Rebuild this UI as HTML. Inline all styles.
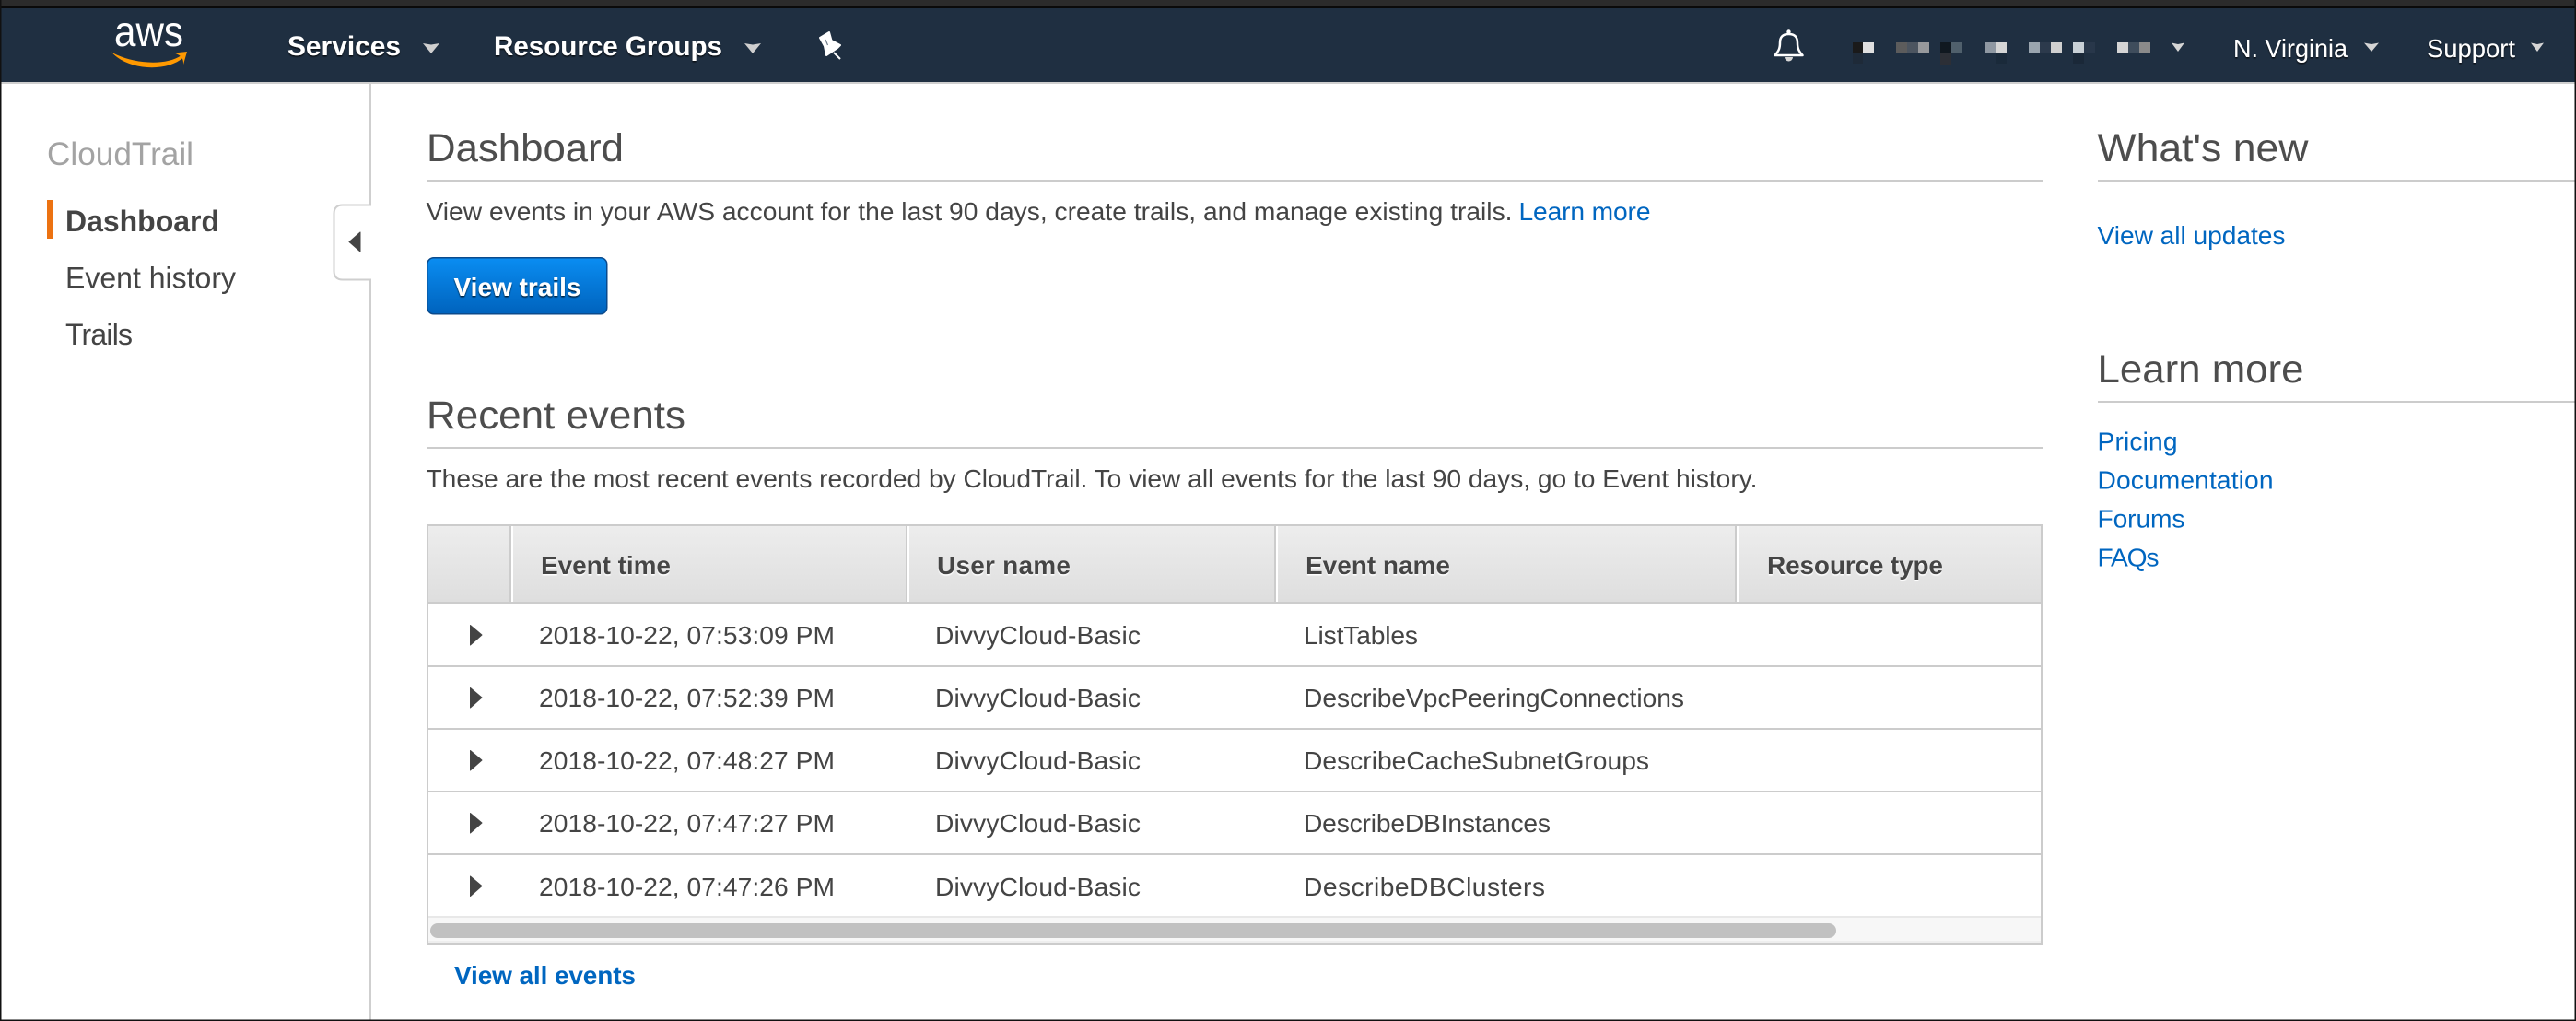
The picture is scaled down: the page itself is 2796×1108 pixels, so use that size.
<!DOCTYPE html>
<html lang="en">
<head>
<meta charset="utf-8">
<title>CloudTrail Dashboard</title>
<style>
html,body{margin:0;padding:0;background:#fff;width:2796px;height:1108px;overflow:hidden}
svg{display:block}
text{font-family:"Liberation Sans",Arial,sans-serif;white-space:pre}
.b{font-weight:700}
.t{font-size:28.2px;fill:#444}
.l{font-size:28.2px;fill:#0066c0}
.h{font-size:43px;fill:#4d4d4d}
.s{font-size:32px;fill:#444}
.th{font-size:28px;font-weight:700;fill:#444}
.n{fill:#fff;font-size:28px}
.nb{fill:#fff;font-size:29.5px}
</style>
</head>
<body>
<svg width="2796" height="1108" viewBox="0 0 2796 1108" xmlns="http://www.w3.org/2000/svg">
<defs>
<linearGradient id="btn" x1="0" y1="0" x2="0" y2="1"><stop offset="0" stop-color="#0a8df2"/><stop offset="1" stop-color="#0063bd"/></linearGradient>
<linearGradient id="th" x1="0" y1="0" x2="0" y2="1"><stop offset="0" stop-color="#ededed"/><stop offset="1" stop-color="#dedede"/></linearGradient>
<filter id="sd" x="-5%" y="-20%" width="110%" height="150%"><feDropShadow dx="0" dy="1.5" stdDeviation="0.8" flood-color="#000" flood-opacity=".75"/></filter>
<filter id="sw" x="-5%" y="-20%" width="110%" height="150%"><feDropShadow dx="0" dy="1.5" stdDeviation="0.4" flood-color="#fff" flood-opacity="1"/></filter>
</defs>

<!-- window edge + top bar -->
<rect width="2796" height="1108" fill="#fff"/>
<rect width="2796" height="7" fill="#2b2b2b"/>
<rect y="7" width="2796" height="2" fill="#0a0a0a"/>
<rect y="9" width="2796" height="80" fill="#1f2f41"/>
<rect y="89" width="2796" height="2" fill="#cfcfcf"/>

<!-- aws logo -->
<text x="124" y="50" font-size="46" fill="#fff" textLength="75" lengthAdjust="spacingAndGlyphs">aws</text>
<path d="M121 56.500 C140 68 178 73 197 60 L199 62.500 C180 79 138 76 121 56.500Z" fill="#f90"/>
<path d="M189 57.500 L203 56 L199 70 C199.500 64 197 60 189 57.500Z" fill="#f90"/>

<!-- nav left -->
<text class="nb b" x="312" y="60" textLength="123" lengthAdjust="spacingAndGlyphs" filter="url(#sd)">Services</text>
<path d="M459 47 L468 48.500 L477 47 L468 58Z" fill="#cfcfcf"/>
<text class="nb b" x="536" y="60" textLength="248" lengthAdjust="spacingAndGlyphs" filter="url(#sd)">Resource Groups</text>
<path d="M808 47 L817 48.500 L826 47 L817 58Z" fill="#cfcfcf"/>
<path d="M890 41 L900 35 L902.500 44 L912 49 L909 52 L897 60 L895 50Z" fill="#fff" stroke="#fff" stroke-width="2" stroke-linejoin="round"/>
<path d="M905 57 L912 64" stroke="#fff" stroke-width="2"/>
<path d="M896 43 L898.500 49" stroke="#6f7c8a" stroke-width="1.200"/>

<!-- bell -->
<circle cx="1941.500" cy="34.500" r="2.200" fill="#fff"/>
<path d="M1926.500 60 H1956.500 C1952 55 1951 52 1951 46.500 C1951 40 1948 37 1941.500 37 C1935 37 1932 40 1932 46.500 C1932 52 1931 55 1926.500 60Z" fill="none" stroke="#fff" stroke-width="2.500" stroke-linejoin="round"/>
<path d="M1937 62 A4.500 4.500 0 0 0 1946 62Z" fill="#d8d8d8"/>

<!-- obscured account name -->
<g>
<rect x="2011" y="46" width="11" height="12" fill="#1a1a1a"/><rect x="2022" y="46" width="12" height="12" fill="#e0e0e0"/>
<rect x="2058" y="46" width="12" height="12" fill="#5c5c5c"/><rect x="2070" y="46" width="12" height="12" fill="#4c5560"/><rect x="2082" y="46" width="12" height="12" fill="#97999c"/>
<rect x="2106" y="46" width="12" height="12" fill="#101820"/><rect x="2118" y="46" width="12" height="12" fill="#50606c"/>
<rect x="2154" y="46" width="12" height="12" fill="#8f98a2"/><rect x="2166" y="46" width="12" height="12" fill="#d5d5d5"/>
<rect x="2202" y="46" width="12" height="12" fill="#9aa5af"/><rect x="2214" y="46" width="12" height="12" fill="#2c3a4c"/><rect x="2226" y="46" width="12" height="12" fill="#d0d0d0"/>
<rect x="2250" y="46" width="12" height="12" fill="#c8d0d6"/><rect x="2262" y="46" width="12" height="12" fill="#28374a"/>
<rect x="2298" y="46" width="12" height="12" fill="#d5d5d5"/><rect x="2310" y="46" width="12" height="12" fill="#3f4d5c"/><rect x="2322" y="46" width="12" height="12" fill="#8a8a8a"/>
<rect x="2011" y="58" width="11" height="11" fill="#1e2a38"/>
<rect x="2106" y="58" width="12" height="12" fill="#2c2f36"/>
<rect x="2166" y="58" width="12" height="11" fill="#1a2a3a"/>
<rect x="2250" y="58" width="12" height="11" fill="#1a2838"/>
</g>
<path d="M2357 46.500 L2364 48 L2371 46.500 L2364 56Z" fill="#d5d5d5"/>
<text class="n" x="2424" y="62" textLength="124" lengthAdjust="spacingAndGlyphs" filter="url(#sd)">N. Virginia</text>
<path d="M2566 46.500 L2574 48 L2582 46.500 L2574 56Z" fill="#d5d5d5"/>
<text class="n" x="2634" y="62" textLength="96" lengthAdjust="spacingAndGlyphs" filter="url(#sd)">Support</text>
<path d="M2747 46.500 L2754 48 L2761 46.500 L2754 56Z" fill="#d5d5d5"/>

<!-- sidebar -->
<path d="M402 91 V222.500 H372 Q362.500 222.500 362.500 232 V294 Q362.500 303.500 372 303.500 H402 V1108" fill="none" stroke="#cfcfcf" stroke-width="2"/>
<path d="M391 252 V273 L379 262.500Z" fill="#444" stroke="#444" stroke-width="1" stroke-linejoin="round"/>
<text x="51" y="179" font-size="35" fill="#a3a3a3" textLength="159" lengthAdjust="spacingAndGlyphs">CloudTrail</text>
<rect x="51" y="217" width="6" height="42" fill="#ec7211"/>
<text class="s b" x="71" y="251" textLength="167">Dashboard</text>
<text class="s" x="71" y="312.500" textLength="185">Event history</text>
<text class="s" x="71" y="374" textLength="73">Trails</text>

<!-- main: Dashboard -->
<text class="h" x="463" y="175" textLength="214" lengthAdjust="spacingAndGlyphs">Dashboard</text>
<rect x="463" y="195" width="1754" height="2" fill="#cccccc"/>
<text class="t" x="462.500" y="239" textLength="1179">View events in your AWS account for the last 90 days, create trails, and manage existing trails.</text>
<text class="l" x="1648.500" y="239" textLength="143">Learn more</text>
<rect x="463.750" y="279.750" width="195" height="61" rx="7" fill="url(#btn)" stroke="#0a4a8c" stroke-width="1.500"/>
<text x="492.500" y="321" font-size="28" font-weight="700" fill="#fff" textLength="138" filter="url(#sd)">View trails</text>

<!-- main: Recent events -->
<text class="h" x="463" y="465" textLength="281" lengthAdjust="spacingAndGlyphs">Recent events</text>
<rect x="463" y="485" width="1754" height="2" fill="#cccccc"/>
<text class="t" x="462.500" y="529" textLength="1445">These are the most recent events recorded by CloudTrail. To view all events for the last 90 days, go to Event history.</text>

<!-- table -->
<rect x="463" y="569" width="1754" height="456" fill="#fff"/>
<rect x="464" y="570" width="1752" height="84" fill="url(#th)"/>
<g fill="#cccccc">
<rect x="553" y="570" width="2" height="83"/>
<rect x="983" y="570" width="2" height="83"/>
<rect x="1383" y="570" width="2" height="83"/>
<rect x="1883" y="570" width="2" height="83"/>
</g>
<g fill="#ffffff">
<rect x="555" y="570" width="2" height="83"/>
<rect x="985" y="570" width="2" height="83"/>
<rect x="1385" y="570" width="2" height="83"/>
<rect x="1885" y="570" width="2" height="83"/>
</g>
<g filter="url(#sw)">
<text class="th" x="587" y="623" textLength="141">Event time</text>
<text class="th" x="1017" y="623" textLength="145">User name</text>
<text class="th" x="1417" y="623" textLength="157">Event name</text>
<text class="th" x="1918" y="623" textLength="191">Resource type</text>
</g>
<g fill="#cccccc">
<rect x="463" y="653" width="1754" height="2"/>
<rect x="463" y="722" width="1754" height="2"/>
<rect x="463" y="790" width="1754" height="2"/>
<rect x="463" y="858" width="1754" height="2"/>
<rect x="463" y="926" width="1754" height="2"/>
</g>
<!-- scrollbar -->
<rect x="465" y="994" width="1750" height="29" fill="#f7f7f7"/>
<rect x="465" y="994" width="1750" height="2" fill="#e8e8e8"/>
<rect x="465" y="1021" width="1750" height="2" fill="#eeeeee"/>
<rect x="467" y="1002" width="1526" height="16" rx="8" fill="#c1c1c1"/>
<rect x="464" y="570" width="1752" height="454" fill="none" stroke="#cccccc" stroke-width="2"/>

<!-- rows -->
<g fill="#444" stroke="#444" stroke-width="1" stroke-linejoin="round">
<path d="M510.500 678.500 L523 689 L510.500 700Z"/>
<path d="M510.500 746.500 L523 757 L510.500 768Z"/>
<path d="M510.500 814.500 L523 825 L510.500 836Z"/>
<path d="M510.500 882.500 L523 893 L510.500 904Z"/>
<path d="M510.500 951 L523 961.500 L510.500 972.500Z"/>
</g>
<text class="t" x="585" y="699" textLength="321">2018-10-22, 07:53:09 PM</text>
<text class="t" x="1015" y="699" textLength="223">DivvyCloud-Basic</text>
<text class="t" x="1415" y="699" textLength="124">ListTables</text>
<text class="t" x="585" y="767" textLength="321">2018-10-22, 07:52:39 PM</text>
<text class="t" x="1015" y="767" textLength="223">DivvyCloud-Basic</text>
<text class="t" x="1415" y="767" textLength="413">DescribeVpcPeeringConnections</text>
<text class="t" x="585" y="835" textLength="321">2018-10-22, 07:48:27 PM</text>
<text class="t" x="1015" y="835" textLength="223">DivvyCloud-Basic</text>
<text class="t" x="1415" y="835" textLength="375">DescribeCacheSubnetGroups</text>
<text class="t" x="585" y="903" textLength="321">2018-10-22, 07:47:27 PM</text>
<text class="t" x="1015" y="903" textLength="223">DivvyCloud-Basic</text>
<text class="t" x="1415" y="903" textLength="268">DescribeDBInstances</text>
<text class="t" x="585" y="972" textLength="321">2018-10-22, 07:47:26 PM</text>
<text class="t" x="1015" y="972" textLength="223">DivvyCloud-Basic</text>
<text class="t" x="1415" y="972" textLength="262">DescribeDBClusters</text>

<text x="493" y="1068" font-size="28" font-weight="700" fill="#0066c0" textLength="197">View all events</text>

<!-- right column -->
<text class="h" x="2276.500" y="175" textLength="229" lengthAdjust="spacingAndGlyphs">What's new</text>
<rect x="2277" y="195" width="518" height="2" fill="#cccccc"/>
<text class="l" x="2276.500" y="265" textLength="204">View all updates</text>
<text class="h" x="2276.500" y="415" textLength="224" lengthAdjust="spacingAndGlyphs">Learn more</text>
<rect x="2277" y="435" width="518" height="2" fill="#cccccc"/>
<text class="l" x="2276.500" y="488.500" textLength="87">Pricing</text>
<text class="l" x="2276.500" y="530.500" textLength="191">Documentation</text>
<text class="l" x="2276.500" y="572.500" textLength="95">Forums</text>
<text class="l" x="2276.500" y="614.500" textLength="67">FAQs</text>

<!-- window frame -->
<rect x="0" y="0" width="1.500" height="1108" fill="#111"/>
<rect x="2794.500" y="0" width="1.500" height="1108" fill="#111"/>
<rect x="0" y="1106.500" width="2796" height="1.500" fill="#111"/>
</svg>
</body>
</html>
